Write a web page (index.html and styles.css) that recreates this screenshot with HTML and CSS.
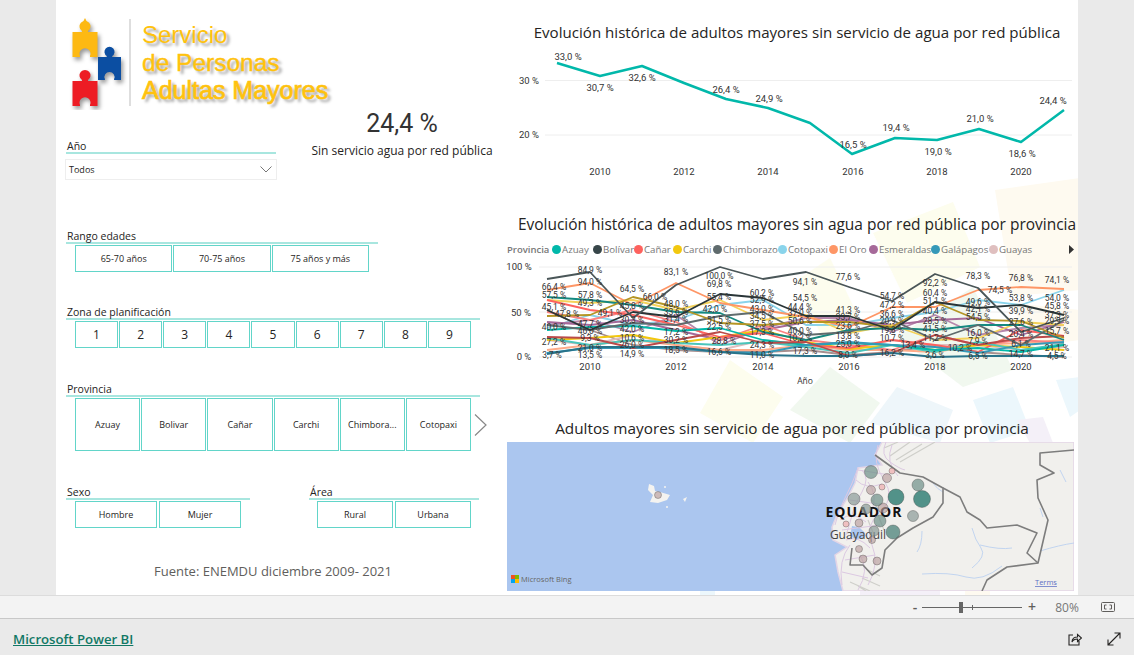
FILE: index.html
```html
<!DOCTYPE html>
<html lang="es">
<head>
    <meta charset="UTF-8">
    <title>Servicio de Personas Adultas Mayores - Power BI</title>
    <link rel="stylesheet" href="styles.css">
</head>
<body>
    <div class="stage">
        <div class="report">
            <!-- faint mosaic behind the charts -->
            <svg class="mosaic" viewBox="56 0 1022 595">
                <polygon class="m-orange" points="995,190 1080,178 1080,290 1012,296"/>
                <polygon class="m-yellow" points="873,233 953,202 980,267 907,303"/>
                <polygon class="m-yellow" points="797,280 830,258 860,320 823,340"/>
                <polygon class="m-yellow" points="700,413 730,360 783,397 753,443"/>
                <polygon class="m-green" points="790,410 830,367 880,403 850,443"/>
                <polygon class="m-green" points="897,337 973,287 1013,370 963,387"/>
                <polygon class="m-blue" points="870,423 897,387 953,410 940,443"/>
                <polygon class="m-sky" points="973,400 1013,387 1030,430 990,443"/>
                <polygon class="m-orange" points="1013,303 1080,310 1080,340 1027,347"/>
                <polygon class="m-sky" points="1056,380 1080,377 1080,410 1070,417"/>
                <polygon class="m-lilac" points="1017,420 1043,417 1053,443 1030,443"/>
                <polygon class="m-sky" points="700,590 715,590 715,595 700,595"/>
                <polygon class="m-lilac" points="860,590 940,590 940,595 860,595"/>
                <polygon class="m-orange" points="965,590 990,590 990,595 965,595"/>
            </svg>

            <div class="left">
                <div class="logo">
                    <svg class="logo-mark" viewBox="56 0 78 110">
                        <defs>
                            <path id="piece" d="M0 0H9.5V-1A5.5 5.5 0 1 1 15.5 -1V0H25V25H17.5V24A5.5 5.5 0 1 0 7.5 24V25H0Z"/>
                        </defs>
                        <rect class="logo-rule" x="129" y="19" width="2" height="87"/>
                        <g class="logo-pieces">
                            <path class="yellow-tip" d="M85 18L88 24H82Z"/>
                            <use href="#piece" class="yellow" transform="translate(72.500 32)"/>
                            <use href="#piece" class="blue" transform="translate(98 57) scale(.92)"/>
                            <use href="#piece" class="red" transform="translate(72.500 81)"/>
                        </g>
                    </svg>
                    <div class="logo-text">
                        <div>Servicio</div>
                        <div class="logo-mid">de Personas</div>
                        <div class="logo-strong">Adultas Mayores</div>
                    </div>
                </div>

                <div class="year-row">
                    <div class="slicer slicer-year">
                        <div class="slicer-title">Año</div>
                        <div class="dropdown">
                            <span>Todos</span>
                            <svg class="caret" viewBox="0 0 12 7"><path d="M.5 .5L6 6L11.500 .5"/></svg>
                        </div>
                    </div>
                    <div class="kpi">
                        <div class="kpi-value">24,4 %</div>
                        <div class="kpi-label">Sin servicio agua por red pública</div>
                    </div>
                </div>

                <div class="slicer slicer-age">
                    <div class="slicer-title">Rango edades</div>
                    <div class="chips">
                        <div class="chip">65-70 años</div>
                        <div class="chip">70-75 años</div>
                        <div class="chip">75 años y más</div>
                    </div>
                </div>

                <div class="slicer slicer-zone slicer-planning">
                    <div class="slicer-title">Zona de planificación</div>
                    <div class="chips chips-zone">
                        <div class="chip">1</div>
                        <div class="chip">2</div>
                        <div class="chip">3</div>
                        <div class="chip">4</div>
                        <div class="chip">5</div>
                        <div class="chip">6</div>
                        <div class="chip">7</div>
                        <div class="chip">8</div>
                        <div class="chip">9</div>
                    </div>
                </div>

                <div class="slicer slicer-zone">
                    <div class="slicer-title">Provincia</div>
                    <div class="province-row">
                        <div class="chips chips-province">
                            <div class="chip">Azuay</div>
                            <div class="chip">Bolivar</div>
                            <div class="chip">Cañar</div>
                            <div class="chip">Carchi</div>
                            <div class="chip">Chimbora...</div>
                            <div class="chip">Cotopaxi</div>
                        </div>
                        <svg class="next" viewBox="0 0 13 22"><path d="M1 .5L12 11L1 21.500"/></svg>
                    </div>
                </div>

                <div class="pair">
                    <div class="slicer slicer-sex">
                        <div class="slicer-title">Sexo</div>
                        <div class="chips">
                            <div class="chip">Hombre</div>
                            <div class="chip">Mujer</div>
                        </div>
                    </div>
                    <div class="slicer slicer-area">
                        <div class="slicer-title">Área</div>
                        <div class="chips chips-area">
                            <div class="chip">Rural</div>
                            <div class="chip">Urbana</div>
                        </div>
                    </div>
                </div>

                <div class="source">Fuente: ENEMDU diciembre 2009- 2021</div>
            </div>

            <div class="right">
                <h2 class="chart-title title-first">Evolución histórica de adultos mayores sin servicio de agua por red pública</h2>
                <svg class="chart chart-total" viewBox="506 45 572 140">
                    <line class="grid" x1="545" x2="1072" y1="80.5" y2="80.5"/>
                    <line class="grid" x1="545" x2="1072" y1="135" y2="135"/>
                    <polyline class="line-total" points="557,63 600,76 642,66 684,83 726,99 768,108 810,123 852,154 895,138 937,140 979,129 1021,142 1064,110"/>
                    <g class="labels">
                        <text x="529" y="81">30 %</text>
                        <text x="529" y="135">20 %</text>
                        <text x="568" y="57">33,0 %</text>
                        <text x="600" y="88">30,7 %</text>
                        <text x="642" y="78">32,6 %</text>
                        <text x="726" y="90">26,4 %</text>
                        <text x="769" y="99">24,9 %</text>
                        <text x="853" y="145">16,5 %</text>
                        <text x="896" y="128">19,4 %</text>
                        <text x="938" y="152">19,0 %</text>
                        <text x="980" y="119">21,0 %</text>
                        <text x="1022" y="154">18,6 %</text>
                        <text x="1053" y="101">24,4 %</text>
                        <text x="600" y="172">2010</text>
                        <text x="684" y="172">2012</text>
                        <text x="768" y="172">2014</text>
                        <text x="853" y="172">2016</text>
                        <text x="937" y="172">2018</text>
                        <text x="1021" y="172">2020</text>
                    </g>
                </svg>

                <h2 class="chart-title title-second">Evolución histórica de adultos mayores sin agua por red pública por provincia</h2>
                <div class="legend">
                    <b>Provincia</b>
                    <span class="key"><i class="dot c-azuay"></i>Azuay</span>
                    <span class="key"><i class="dot c-bolivar"></i>Bolívar</span>
                    <span class="key"><i class="dot c-canar"></i>Cañar</span>
                    <span class="key"><i class="dot c-carchi"></i>Carchi</span>
                    <span class="key"><i class="dot c-chimborazo"></i>Chimborazo</span>
                    <span class="key"><i class="dot c-cotopaxi"></i>Cotopaxi</span>
                    <span class="key"><i class="dot c-oro"></i>El Oro</span>
                    <span class="key"><i class="dot c-esmeraldas"></i>Esmeraldas</span>
                    <span class="key"><i class="dot c-galapagos"></i>Galápagos</span>
                    <span class="key"><i class="dot c-guayas"></i>Guayas</span>
                    <svg class="legend-arrow" viewBox="0 0 5 9"><path d="M0 0L5 4.500L0 9Z"/></svg>
                </div>
                <svg class="chart chart-provinces" viewBox="506 258 572 130">
                    <line class="grid" x1="539" x2="1072" y1="267" y2="267"/>
                    <line class="grid" x1="539" x2="1072" y1="312" y2="312"/>
                    <line class="grid" x1="539" x2="1072" y1="357" y2="357"/>
                    <g class="lines">
                        <polyline stroke="#a78f8f" points="547,310 590,330 633,345 676,350 720,352 763,352 806,350 849,355 892,352 935,345 978,352 1021,355 1064,357"/>
                        <polyline stroke="#dfbfbf" points="547,340 590,345 633,335 676,345 720,350 763,340 806,345 849,350 892,340 935,345 978,345 1021,350 1064,347"/>
                        <polyline stroke="#fdab89" points="547,350 590,345 633,340 676,345 720,350 763,350 806,345 849,350 892,350 935,352 978,345 1021,343 1064,340"/>
                        <polyline stroke="#8ad4eb" points="547,328 590,315 633,325 676,320 720,305 763,300 806,325 849,325 892,318 935,312 978,300 1021,305 1064,290"/>
                        <polyline stroke="#b687ac" points="547,325 590,320 633,332 676,315 720,345 763,328 806,318 849,318 892,332 935,315 978,335 1021,328 1064,325"/>
                        <polyline stroke="#a66999" points="547,322 590,325 633,320 676,330 720,340 763,330 806,322 849,320 892,325 935,320 978,318 1021,335 1064,322"/>
                        <polyline stroke="#f4d25a" points="547,300 590,303 633,300 676,310 720,300 763,320 806,315 849,333 892,325 935,340 978,338 1021,322 1064,325"/>
                        <polyline stroke="#fb8281" points="547,312 590,320 633,310 676,322 720,340 763,325 806,340 849,345 892,350 935,335 978,345 1021,340 1064,343"/>
                        <polyline stroke="#f2c80f" points="547,340 590,338 633,335 676,343 720,337 763,330 806,342 849,349 892,345 935,350 978,345 1021,347 1064,350"/>
                        <polyline stroke="#fd625e" points="547,300 590,310 633,315 676,325 720,337 763,333 806,345 849,348 892,340 935,345 978,352 1021,330 1064,336"/>
                        <polyline stroke="#fe9666" points="547,290 590,283 633,305 676,283 720,303 763,310 806,317 849,327 892,307 935,307 978,290 1021,287 1064,289"/>
                        <polyline stroke="#4ac5bb" points="547,338 590,345 633,340 676,343 720,345 763,342 806,347 849,353 892,345 935,352 978,342 1021,350 1064,344"/>
                        <polyline stroke="#01b8aa" points="547,330 590,327 633,326 676,331 720,328 763,340 806,345 849,343 892,345 935,350 978,348 1021,352 1064,345"/>
                        <polyline stroke="#3599b8" points="547,353 590,348 633,348 676,348 720,352 763,353 806,345 849,342 892,345 935,347 978,353 1021,345 1064,342"/>
                        <polyline stroke="#bb4a4a" points="547,337 590,338 633,348 676,340 720,332 763,343 806,342 849,356 892,353 935,335 978,345 1021,338 1064,336"/>
                        <polyline stroke="#168980" points="547,297 590,300 633,305 676,312 720,313 763,332 806,340 849,330 892,328 935,330 978,325 1021,325 1064,340"/>
                        <polyline stroke="#5f6b6d" points="547,325 590,330 633,323 676,325 720,316 763,312 806,335 849,332 892,320 935,340 978,325 1021,345 1064,320"/>
                        <polyline stroke="#28738a" points="547,354 590,347 633,347 676,347 720,352 763,355 806,356 849,356 892,353 935,357 978,356 1021,356 1064,356"/>
                        <polyline stroke="#b59525" points="547,316 590,315 633,297 676,307 720,323 763,325 806,322 849,322 892,327 935,302 978,320 1021,321 1064,338"/>
                        <polyline stroke="#293537" points="547,310 590,330 633,312 676,317 720,294 763,298 806,316 849,316 892,330 935,302 978,308 1021,305 1064,315"/>
                        <polyline stroke="#4a5658" points="547,279 590,272 633,318 676,285 720,267 763,279 806,272 849,287 892,301 935,274 978,288 1021,332 1064,318"/>
                    </g>
                    <g class="labels labels-small">
                        <text x="590" y="271">84,9 %</text><text x="554" y="288">66,4 %</text><text x="590" y="283">94,0 %</text>
                        <text x="676" y="273">83,1 %</text><text x="719" y="277">100,0 %</text><text x="719" y="285">69,8 %</text>
                        <text x="632" y="290">64,5 %</text><text x="554" y="296">57,5 %</text><text x="590" y="296">57,8 %</text>
                        <text x="762" y="294">60,2 %</text><text x="762" y="301">52,9 %</text><text x="655" y="298">66,0 %</text>
                        <text x="719" y="298">55,4 %</text><text x="590" y="304">49,3 %</text><text x="676" y="305">48,0 %</text>
                        <text x="554" y="308">45,1 %</text><text x="632" y="307">45,8 %</text><text x="762" y="310">43,0 %</text>
                        <text x="715" y="310">42,0 %</text><text x="567" y="315">47,8 %</text><text x="610" y="314">49,1 %</text>
                        <text x="676" y="313">33,6 %</text><text x="762" y="317">34,5 %</text><text x="590" y="325">47,7 %</text>
                        <text x="554" y="328">40,0 %</text><text x="632" y="321">30,3 %</text><text x="676" y="320">31,4 %</text>
                        <text x="719" y="321">51,5 %</text><text x="762" y="325">37,5 %</text><text x="719" y="328">22,5 %</text>
                        <text x="590" y="332">46,0 %</text><text x="632" y="330">42,0 %</text><text x="676" y="333">17,2 %</text>
                        <text x="762" y="333">17,3 %</text><text x="590" y="339">9,3 %</text><text x="632" y="339">10,6 %</text>
                        <text x="554" y="343">27,2 %</text><text x="676" y="341">30,2 %</text><text x="724" y="342">28,8 %</text>
                        <text x="632" y="346">26,0 %</text><text x="590" y="349">21,0 %</text><text x="762" y="346">24,3 %</text>
                        <text x="676" y="351">18,5 %</text><text x="719" y="353">16,6 %</text><text x="552" y="356">3,7 %</text>
                        <text x="590" y="356">13,5 %</text><text x="632" y="355">14,9 %</text><text x="762" y="356">11,0 %</text>
                        <text x="805" y="283">94,1 %</text><text x="848" y="278">77,6 %</text><text x="935" y="284">92,2 %</text>
                        <text x="978" y="277">78,3 %</text><text x="1021" y="279">76,8 %</text><text x="1057" y="281">74,1 %</text>
                        <text x="1000" y="291">74,5 %</text><text x="892" y="297">54,7 %</text><text x="935" y="294">60,4 %</text>
                        <text x="805" y="299">54,5 %</text><text x="1057" y="299">54,0 %</text><text x="935" y="302">51,1 %</text>
                        <text x="1021" y="299">53,8 %</text><text x="892" y="306">47,2 %</text><text x="978" y="303">49,6 %</text>
                        <text x="1057" y="307">45,8 %</text><text x="800" y="308">44,4 %</text><text x="978" y="310">42,1 %</text>
                        <text x="848" y="311">41,3 %</text><text x="935" y="312">40,4 %</text><text x="1021" y="312">39,9 %</text>
                        <text x="892" y="315">36,6 %</text><text x="800" y="314">37,0 %</text><text x="848" y="318">33,7 %</text>
                        <text x="1057" y="316">37,3 %</text><text x="978" y="318">54,5 %</text><text x="1057" y="322">29,9 %</text>
                        <text x="892" y="322">20,9 %</text><text x="935" y="322">28,5 %</text><text x="800" y="322">50,6 %</text>
                        <text x="1021" y="323">27,6 %</text><text x="848" y="327">23,6 %</text><text x="892" y="331">19,3 %</text>
                        <text x="935" y="330">41,5 %</text><text x="800" y="332">40,0 %</text><text x="978" y="334">16,0 %</text>
                        <text x="1021" y="335">20,4 %</text><text x="1057" y="332">15,7 %</text><text x="848" y="337">13,8 %</text>
                        <text x="800" y="339">10,2 %</text><text x="892" y="339">10,7 %</text><text x="935" y="339">11,2 %</text>
                        <text x="978" y="342">7,9 %</text><text x="1021" y="345">6,1 %</text><text x="848" y="345">25,0 %</text>
                        <text x="913" y="346">13,4 %</text><text x="960" y="349">10,2 %</text><text x="1057" y="349">21,1 %</text>
                        <text x="805" y="352">17,3 %</text><text x="892" y="354">16,2 %</text><text x="848" y="356">8,0 %</text>
                        <text x="935" y="356">3,6 %</text><text x="978" y="357">6,5 %</text><text x="1021" y="355">14,7 %</text>
                        <text x="1057" y="357">4,5 %</text>
                    </g>
                    <g class="labels">
                        <text x="519" y="267">100 %</text>
                        <text x="521" y="313">50 %</text>
                        <text x="524" y="357">0 %</text>
                        <text x="590" y="367">2010</text>
                        <text x="676" y="367">2012</text>
                        <text x="763" y="367">2014</text>
                        <text x="849" y="367">2016</text>
                        <text x="935" y="367">2018</text>
                        <text x="1021" y="367">2020</text>
                    </g>
                    <text class="axis-name" x="805" y="384">Año</text>
                </svg>

                <h2 class="chart-title title-third">Adultos mayores sin servicio de agua por red pública por provincia</h2>
                <svg class="map" viewBox="507 442 567 149">
                    <rect class="sea" x="507" y="442" width="567" height="149"/>
                    <polygon class="land" points="882,442 875,455 882,465 858,468 855,483 848,497 837,515 832,527 833,540 847,547 835,555 838,572 843,591 1074,591 1074,442"/>
                    <path class="gulf" d="M852 526Q862 526 866 536Q858 542 850 536Z"/>
                    <g class="isles">
                        <path d="M649 484L654 486L655 491L660 492L670 495L667 500L658 503L650 502L653 495L648 490Z"/>
                        <path d="M683 499L687 497L685 502Z"/>
                        <circle cx="665" cy="487" r="1"/>
                        <circle cx="667" cy="507" r="1"/>
                    </g>
                    <g class="terrain">
                        <path d="M890 456L910 442M896 460L922 444M884 448L898 442M900 462L935 442"/>
                        <path d="M862 578L880 586M850 582L870 591M868 570L880 576M858 586L866 591"/>
                        <path d="M872 500L880 512M878 515L884 530M868 520L874 535"/>
                    </g>
                    <g class="roads">
                        <path d="M862 470Q870 478 862 492T852 515T846 535"/>
                        <path d="M878 445Q872 462 884 480T880 512T872 545T868 585"/>
                        <path d="M858 470L890 475M850 500L885 505M842 530L880 525M845 560L875 555"/>
                        <path d="M892 445Q885 462 898 476M856 480Q866 490 882 484M840 520Q852 510 866 522"/>
                        <path d="M860 555Q870 570 858 590M842 572L868 578"/>
                        <path d="M858 468Q852 485 845 498T835 525M850 545Q838 560 842 585"/>
                        <path d="M886 442Q880 455 890 462T905 470M868 482Q878 495 872 510M846 540Q858 535 870 548"/>
                    </g>
                    <g class="rivers">
                        <path d="M932 482Q938 490 943 492M972 528Q975 540 981 548T972 568M922 531Q922 545 917 552"/>
                        <path d="M922 574Q950 572 966 577T1002 566M1043 517L1040 508M1040 551Q1060 545 1074 543M1060 470L1066 482"/>
                        <path d="M980 545Q1000 550 1012 548"/>
                    </g>
                    <g class="borders">
                        <polyline points="875,455 900,473 923,477 943,488 943,503 933,517 913,528 897,538 885,550 882,568 872,575 863,565 850,565 852,548"/>
                        <polyline points="943,488 960,497 967,512 980,520 987,528 1017,525 1037,533 1027,553 1038,563"/>
                        <polyline points="1074,450 1040,453 1040,465 1054,473 1037,480 1038,498 1048,520 1038,563 1007,567 987,580 982,591"/>
                    </g>
                    <text class="map-country" x="864" y="517">EQUADOR</text>
                    <text class="map-city" x="858" y="539">Guayaquil</text>
                    <g class="bubbles">
                        <circle class="b-pink" cx="892" cy="471" r="3"/>
                        <circle class="b-pink" cx="882" cy="487" r="3"/>
                        <circle class="b-pink" cx="846" cy="524" r="3"/>
                        <circle class="b-rose" cx="887" cy="478" r="4.500"/>
                        <circle class="b-rose" cx="871" cy="490" r="4.500"/>
                        <circle class="b-rose" cx="883" cy="508" r="5"/>
                        <circle class="b-rose" cx="859" cy="523" r="4"/>
                        <circle class="b-rose" cx="872" cy="540" r="3.500"/>
                        <circle class="b-rose" cx="859" cy="549" r="3.500"/>
                        <circle class="b-rose" cx="863" cy="559" r="4"/>
                        <circle class="b-rose" cx="877" cy="561" r="4"/>
                        <circle class="b-rose" cx="658" cy="495" r="3.500"/>
                        <circle class="b-grey" cx="866" cy="509" r="5"/>
                        <circle class="b-grey" cx="874" cy="531" r="5"/>
                        <circle class="b-grey" cx="913" cy="516" r="5.500"/>
                        <circle class="b-grey" cx="854" cy="499" r="6"/>
                        <circle class="b-sage" cx="871" cy="472" r="6.500"/>
                        <circle class="b-sage" cx="918" cy="485" r="6"/>
                        <circle class="b-sage" cx="877" cy="500" r="6"/>
                        <circle class="b-sage" cx="880" cy="521" r="6"/>
                        <circle class="b-teal" cx="893" cy="532" r="7"/>
                        <circle class="b-deep" cx="896" cy="497" r="8"/>
                        <circle class="b-deep" cx="922" cy="499" r="8.500"/>
                    </g>
                    <rect class="ms-r" x="511" y="575" width="4" height="4"/>
                    <rect class="ms-g" x="515" y="575" width="4" height="4"/>
                    <rect class="ms-b" x="511" y="579" width="4" height="4"/>
                    <rect class="ms-y" x="515" y="579" width="4" height="4"/>
                    <text class="map-bing" x="521" y="582">Microsoft Bing</text>
                    <text class="map-terms" x="1035" y="585">Terms</text>
                </svg>
            </div>
        </div>
    </div>

    <div class="zoom-bar">
        <span class="zoom-sign">-</span>
        <div class="zoom-track"><i class="zoom-tick"></i><i class="zoom-thumb"></i></div>
        <span class="zoom-sign">+</span>
        <span class="zoom-value">80%</span>
        <svg class="fit-icon" viewBox="0 0 14 10">
            <rect x=".5" y=".5" width="13" height="9" rx="1"/>
            <path d="M3.500 5V3H5.500M8.500 3H10.500V5M10.500 5V7H8.500M5.500 7H3.500V5"/>
        </svg>
    </div>

    <div class="footer">
        <a class="brand" href="#">Microsoft Power BI</a>
        <svg class="foot-icon share" viewBox="0 0 14 14">
            <path d="M5 3H1V13H11V9M4 10C4 6.500 6.500 5 9.500 5V2.500L13.500 6L9.500 9.500V7C7 7 5 8 4 10Z"/>
        </svg>
        <svg class="foot-icon expand" viewBox="0 0 14 14">
            <path d="M1 13L13 1M7.500 1H13V6.500M1 7.500V13H6.500"/>
        </svg>
    </div>
</body>
</html>
```

FILE: styles.css
```css
* {
    box-sizing: border-box;
}

body {
    margin: 0;
    height: 655px;
    overflow: hidden;
    background-color: #eaeaea;
    font-family: "Open Sans", sans-serif;
    color: #252423;
}

.stage {
    height: 596px;
    padding-left: 56px;
    border-bottom: 1px solid #dcdcdc;
}

.report {
    position: relative;
    display: flex;
    width: 1022px;
    height: 595px;
    background-color: white;
}

.mosaic {
    position: absolute;
    top: 0;
    left: 0;
    width: 1022px;
    height: 595px;
}

.m-orange { fill: #fefaf0; }
.m-yellow { fill: #fdfdee; }
.m-green { fill: #f1f8ef; }
.m-blue { fill: #eef6fa; }
.m-sky { fill: #ecf7fc; }
.m-lilac { fill: #f4f0f8; }

/* left column */
.left {
    position: relative;
    width: 450px;
}

.logo {
    display: flex;
    height: 110px;
}

.logo-mark {
    width: 78px;
    height: 110px;
}

.logo-rule { fill: #dedede; }
.logo-pieces { filter: drop-shadow(2px 3px 2px #999); }
.yellow, .yellow-tip { fill: #fdb913; }
.blue { fill: #0b4ea2; }
.red { fill: #ed1c24; }

.logo-text {
    margin-left: 8px;
    padding-top: 21px;
    font-family: "Liberation Sans", sans-serif;
    font-size: 24px;
    line-height: 28px;
    white-space: nowrap;
    color: #ffc20e;
    text-shadow: 3px 3px 3px #a0a0a0;
}

.logo-mid {
    font-size: 24.500px;
    -webkit-text-stroke: .4px #ffc20e;
}

.logo-strong {
    font-size: 25px;
    margin-top: -1px;
    -webkit-text-stroke: .7px #ffc20e;
}

.year-row {
    display: flex;
}

.slicer {
    margin-left: 10px;
}

.slicer-title {
    height: 14px;
    padding-left: 1px;
    font-size: 10.500px;
    line-height: 12px;
    border-bottom: 2px solid #a8e6df;
    margin-bottom: 1px;
    white-space: nowrap;
}

.slicer-year {
    width: 210px;
    margin-top: 30px;
}

.dropdown {
    display: flex;
    justify-content: space-between;
    align-items: center;
    width: 212px;
    height: 21px;
    margin: 5px 0 0 -1px;
    padding: 0 3px;
    font-size: 9px;
    border: 1px solid #eee;
}

.caret {
    width: 12px;
    height: 7px;
    margin-right: 1px;
    fill: none;
    stroke: #777;
}

.kpi {
    width: 190px;
    margin-left: 31px;
    text-align: center;
}

.kpi-value {
    padding-top: 1px;
    font-family: Roboto, sans-serif;
    font-size: 25px;
    line-height: 26px;
    color: #333;
}

.kpi-label {
    margin-top: 6px;
    font-size: 12px;
    line-height: 16px;
    white-space: nowrap;
}

.chips {
    display: flex;
    gap: 1px;
    margin-left: 9px;
}

.chip {
    flex: 1;
    display: flex;
    align-items: center;
    justify-content: center;
    height: 27px;
    font-size: 9px;
    white-space: nowrap;
    border: 1px solid #62d5c9;
    background-color: white;
}

.slicer-age {
    width: 312px;
    margin-top: 50px;
}

.slicer-age .chips {
    width: 294px;
}

.slicer-zone {
    width: 414px;
    margin-top: 35px;
}

.slicer-planning {
    margin-top: 34px;
}

.chips-zone {
    width: 396px;
}

.chips-zone .chip {
    font-size: 12px;
}

.province-row {
    display: flex;
    align-items: center;
    gap: 3px;
}

.chips-province {
    width: 396px;
    flex: none;
}

.chips-province .chip {
    height: 53px;
}

.next {
    flex: none;
    width: 13px;
    height: 22px;
    fill: none;
    stroke: #888;
    stroke-width: 1.200;
}

.pair {
    display: flex;
    margin-top: 35px;
}

.slicer-sex {
    width: 184px;
}

.slicer-sex .chips {
    width: 166px;
    gap: 2px;
}

.slicer-area {
    width: 170px;
    margin-left: 59px;
}

.chips-area {
    width: 154px;
    margin-left: 8px;
    gap: 2px;
}

.source {
    margin-top: 34px;
    padding-right: 16px;
    text-align: center;
    font-size: 13px;
    line-height: 18px;
    color: #605e5c;
}

/* right column */
.right {
    position: relative;
    width: 572px;
}

.chart-title {
    margin: 0;
    font-size: 15.100px;
    font-weight: 400;
    line-height: 20px;
    text-align: center;
    white-space: nowrap;
}

.title-first {
    padding-top: 22px;
    padding-left: 10px;
    height: 45px;
}

.chart {
    display: block;
    width: 572px;
}

.chart-total {
    height: 140px;
}

.title-second {
    padding-top: 29px;
    padding-left: 10px;
    height: 52px;
    font-size: 15.480px;
}

.legend {
    display: flex;
    align-items: center;
    height: 21px;
    padding-left: 1px;
    padding-top: 3px;
    font-size: 9.700px;
    color: #777;
    white-space: nowrap;
}

.legend b {
    width: 45px;
    font-size: 9.500px;
    font-weight: 600;
}

.key {
    display: flex;
    align-items: center;
}

.dot {
    flex: none;
    width: 9px;
    height: 9px;
    margin-right: 1px;
    border-radius: 50%;
}

.key:nth-of-type(1) { width: 41px; }
.key:nth-of-type(2) { width: 41px; }
.key:nth-of-type(3) { width: 39px; }
.key:nth-of-type(4) { width: 40px; }
.key:nth-of-type(5) { width: 65px; }
.key:nth-of-type(6) { width: 51px; }
.key:nth-of-type(7) { width: 40px; }
.key:nth-of-type(8) { width: 62px; }
.key:nth-of-type(9) { width: 58px; }
.key:nth-of-type(10) { width: 80px; }

.c-azuay { background-color: #01b8aa; }
.c-bolivar { background-color: #374649; }
.c-canar { background-color: #fd625e; }
.c-carchi { background-color: #f2c80f; }
.c-chimborazo { background-color: #5f6b6d; }
.c-cotopaxi { background-color: #8ad4eb; }
.c-oro { background-color: #fe9666; }
.c-esmeraldas { background-color: #a66999; }
.c-galapagos { background-color: #3599b8; }
.c-guayas { background-color: #dfbfbf; }

.legend-arrow {
    flex: none;
    width: 5px;
    height: 9px;
    fill: #333;
}

.chart-provinces {
    height: 130px;
}

.title-third {
    height: 24px;
    margin-top: 30px;
    font-size: 15.300px;
}

.grid {
    stroke: #eeeeee;
    stroke-width: 1;
}

.line-total {
    fill: none;
    stroke: #01b8aa;
    stroke-width: 2.500;
    stroke-linejoin: round;
}

.lines polyline {
    fill: none;
    stroke-width: 1.800;
    stroke-linejoin: round;
}

.labels text {
    font-family: Roboto, sans-serif;
    font-size: 9.500px;
    fill: #333;
    text-anchor: middle;
    dominant-baseline: middle;
}

.labels-small text {
    font-size: 8.500px;
}

.axis-name {
    font-size: 8.500px;
    fill: #333;
    text-anchor: middle;
}

.map {
    display: block;
    width: 567px;
    height: 149px;
    margin-left: 1px;
}

.sea { fill: #abc6ef; }
.land { fill: #f1f0ed; stroke: #e3d5e6; stroke-width: 1.500; }
.gulf { fill: #abc6ef; }
.isles { fill: #f4f3f0; }

.terrain {
    fill: none;
    stroke: #cfcfca;
    stroke-width: 1.200;
}

.roads {
    fill: none;
    stroke: #dcc9e2;
    stroke-width: 1;
}

.rivers {
    fill: none;
    stroke: #b5cdf0;
    stroke-width: .8;
}

.borders polyline {
    fill: none;
    stroke: #7d7d7d;
    stroke-width: 1.600;
    stroke-linejoin: round;
}

.bubbles circle {
    stroke: #444;
    stroke-opacity: .45;
    stroke-width: .8;
}

.b-pink { fill: #eeb0b0; fill-opacity: .75; }
.b-rose { fill: #b89c9c; fill-opacity: .65; }
.b-grey { fill: #8a9a97; fill-opacity: .7; }
.b-sage { fill: #6c8f88; fill-opacity: .7; }
.b-teal { fill: #4a8178; fill-opacity: .75; }
.b-deep { fill: #2a7a6f; fill-opacity: .8; }

.map-country {
    font-family: "Open Sans", sans-serif;
    font-size: 14px;
    font-weight: 700;
    letter-spacing: 1px;
    text-anchor: middle;
    fill: #111;
}

.map-city {
    font-family: "Open Sans", sans-serif;
    font-size: 12px;
    text-anchor: middle;
    fill: #444;
}

.ms-r { fill: #f25022; }
.ms-g { fill: #7fba00; }
.ms-b { fill: #00a4ef; }
.ms-y { fill: #ffb900; }

.map-bing {
    font-family: "Open Sans", sans-serif;
    font-size: 7.500px;
    fill: #666;
}

.map-terms {
    font-family: "Open Sans", sans-serif;
    font-size: 7.500px;
    fill: #5d6fc4;
    text-decoration: underline;
}

/* bottom bars */
.zoom-bar {
    display: flex;
    align-items: center;
    height: 23px;
    padding-left: 910px;
    background-color: #f3f3f3;
    border-bottom: 1px solid #c8c8c8;
    color: #605e5c;
}

.zoom-sign {
    width: 10px;
    font-size: 14px;
    font-weight: 600;
    text-align: center;
    line-height: 14px;
}

.zoom-track {
    position: relative;
    width: 100px;
    height: 1px;
    margin-left: 2px;
    margin-right: 5px;
    background-color: #666;
}

.zoom-tick {
    position: absolute;
    left: 50px;
    top: -2px;
    width: 1px;
    height: 5px;
    background-color: #666;
}

.zoom-thumb {
    position: absolute;
    left: 37px;
    top: -5px;
    width: 4px;
    height: 11px;
    background-color: #666;
}

.zoom-value {
    width: 34px;
    margin-left: 13px;
    font-size: 12px;
    color: #777;
    text-align: center;
}

.fit-icon {
    width: 14px;
    height: 10px;
    margin-left: 17px;
    fill: none;
    stroke: #605e5c;
}

.footer {
    display: flex;
    align-items: center;
    height: 36px;
    padding-left: 13px;
    padding-top: 4px;
}

.brand {
    width: 121px;
    font-size: 13.200px;
    font-weight: 600;
    white-space: nowrap;
    color: #117865;
}

.foot-icon {
    width: 14px;
    height: 14px;
    fill: none;
    stroke: #252423;
    stroke-width: 1.100;
}

.share {
    margin-left: 934px;
}

.expand {
    margin-left: 25px;
}
```
